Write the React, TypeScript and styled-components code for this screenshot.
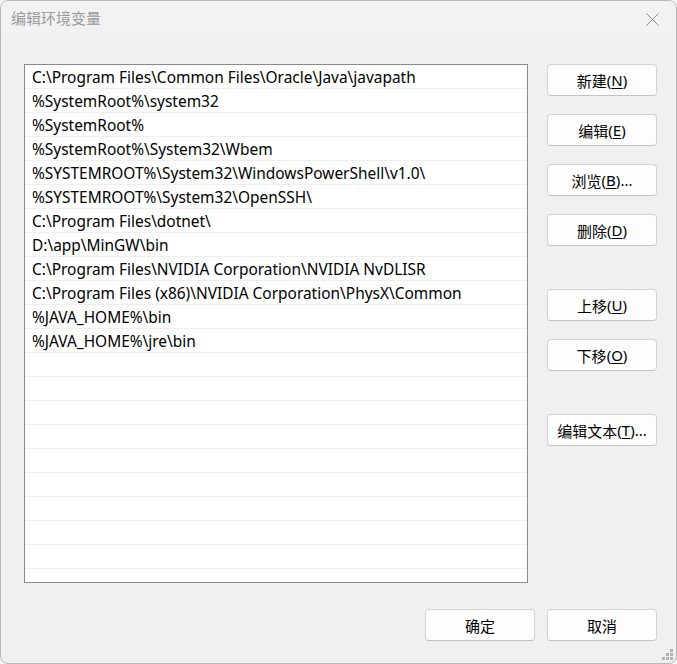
import React from "react";
import styled, { createGlobalStyle } from "styled-components";

const GlobalStyle = createGlobalStyle`
  html, body {
    margin: 0;
    padding: 0;
    background: #f4f4f4;
  }
  * { box-sizing: border-box; }
`;

const FONT = `"Segoe UI", "Noto Sans", "Noto Sans CJK SC", sans-serif`;

const Window = styled.div`
  position: relative;
  width: 677px;
  height: 664px;
  border: 1px solid #b9b9b9;
  border-radius: 8px;
  background: #f0f0f0;
  display: flex;
  flex-direction: column;
  overflow: hidden;
  font-family: ${FONT};
  color: #000;
`;

const TitleBar = styled.div`
  height: 37px;
  flex: none;
  display: flex;
  align-items: center;
  justify-content: space-between;
  padding-left: 10px;
  background: #f2f2f2;
`;

const Title = styled.div`
  font-family: "Noto Sans CJK SC", sans-serif;
  font-size: 15px;
  color: #9a9a9a;
  line-height: 1;
  margin-top: -4px;
`;

const CloseButton = styled.div`
  width: 46px;
  height: 37px;
  display: flex;
  align-items: center;
  justify-content: center;
  margin-right: 1px;
`;

const Body = styled.div`
  display: flex;
  flex-direction: row;
  align-items: flex-start;
  gap: 19px;
  padding: 26px 19px 0 23px;
`;

const List = styled.div`
  width: 504px;
  height: 519px;
  background: #fff;
  border: 1px solid #868a92;
  overflow: hidden;
  display: flex;
  flex-direction: column;
`;

const Row = styled.div`
  height: 24px;
  flex: none;
  border-bottom: 1px solid #efefef;
  padding-left: 7px;
  font-family: "Noto Sans", sans-serif;
  font-size: 15.45px;
  line-height: 24px;
  white-space: nowrap;
`;

const ButtonColumn = styled.div`
  display: flex;
  flex-direction: column;
  width: 110px;
`;

const Btn = styled.div<{ $gapTop?: number }>`
  width: 110px;
  height: 32px;
  margin-top: ${(p) => p.$gapTop ?? 0}px;
  background: #fdfdfd;
  border: 1px solid #d3d3d3;
  border-bottom-color: #c2c2c2;
  border-radius: 4px;
  display: flex;
  align-items: center;
  justify-content: center;
  font-family: "Noto Sans CJK SC", sans-serif;
  font-size: 15px;
  line-height: 1;
  color: #000;
  white-space: nowrap;

  u {
    text-underline-offset: 2px;
  }
`;

const Latin = styled.span`
  font-family: "Noto Sans", sans-serif;
`;

const Footer = styled.div`
  display: flex;
  justify-content: flex-end;
  gap: 12px;
  padding: 26px 19px 0 0;
`;

const Grip = styled.svg`
  position: absolute;
  right: 2px;
  bottom: 2px;
`;

const paths = [
  "C:\\Program Files\\Common Files\\Oracle\\Java\\javapath",
  "%SystemRoot%\\system32",
  "%SystemRoot%",
  "%SystemRoot%\\System32\\Wbem",
  "%SYSTEMROOT%\\System32\\WindowsPowerShell\\v1.0\\",
  "%SYSTEMROOT%\\System32\\OpenSSH\\",
  "C:\\Program Files\\dotnet\\",
  "D:\\app\\MinGW\\bin",
  "C:\\Program Files\\NVIDIA Corporation\\NVIDIA NvDLISR",
  "C:\\Program Files (x86)\\NVIDIA Corporation\\PhysX\\Common",
  "%JAVA_HOME%\\bin",
  "%JAVA_HOME%\\jre\\bin",
];

const TOTAL_ROWS = 22;

function Label({ text, k, suffix }: { text: string; k: string; suffix?: string }) {
  return (
    <>
      {text}
      <Latin>
        (<u>{k}</u>){suffix ?? ""}
      </Latin>
    </>
  );
}

export default function App() {
  const rows = Array.from({ length: TOTAL_ROWS }, (_, i) => paths[i] ?? "");
  return (
    <>
      <GlobalStyle />
      <Window>
        <TitleBar>
          <Title>编辑环境变量</Title>
          <CloseButton>
            <svg width="13" height="13" viewBox="0 0 13 13">
              <path d="M0.5 0.5 L12.5 12.5 M12.5 0.5 L0.5 12.5" stroke="#8c8c8c" strokeWidth="1" fill="none" />
            </svg>
          </CloseButton>
        </TitleBar>
        <Body>
          <List>
            {rows.map((r, i) => (
              <Row key={i}>{r}</Row>
            ))}
          </List>
          <ButtonColumn>
            <Btn>
              <Label text="新建" k="N" />
            </Btn>
            <Btn $gapTop={18}>
              <Label text="编辑" k="E" />
            </Btn>
            <Btn $gapTop={18}>
              <Label text="浏览" k="B" suffix="..." />
            </Btn>
            <Btn $gapTop={18}>
              <Label text="删除" k="D" />
            </Btn>
            <Btn $gapTop={43}>
              <Label text="上移" k="U" />
            </Btn>
            <Btn $gapTop={18}>
              <Label text="下移" k="O" />
            </Btn>
            <Btn $gapTop={43}>
              <Label text="编辑文本" k="T" suffix="..." />
            </Btn>
          </ButtonColumn>
        </Body>
        <Footer>
          <Btn>确定</Btn>
          <Btn>取消</Btn>
        </Footer>
        <Grip width="12" height="12" viewBox="0 0 12 12">
          <g fill="#b4b4b4">
            <rect x="8" y="0" width="3" height="3" />
            <rect x="4" y="4" width="3" height="3" />
            <rect x="8" y="4" width="3" height="3" />
            <rect x="0" y="8" width="3" height="3" />
            <rect x="4" y="8" width="3" height="3" />
            <rect x="8" y="8" width="3" height="3" />
          </g>
        </Grip>
      </Window>
    </>
  );
}
